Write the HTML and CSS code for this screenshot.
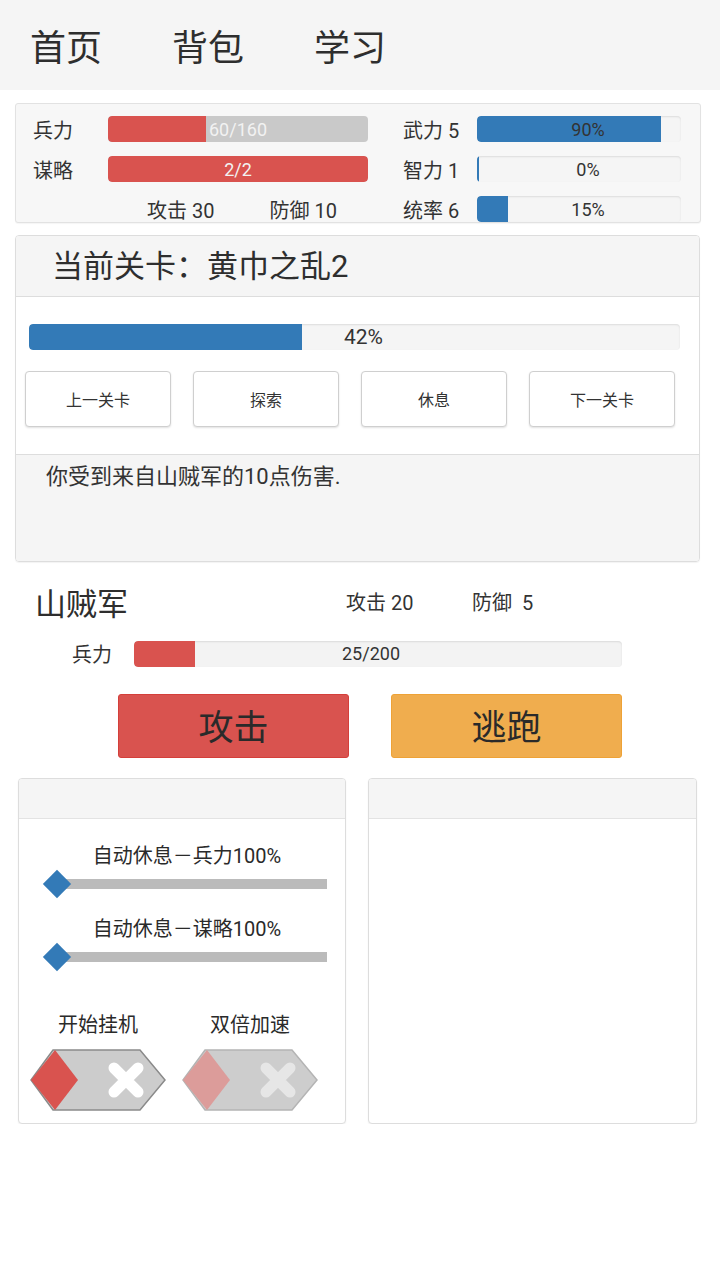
FILE: index.html
```html
<!DOCTYPE html>
<html lang="zh-CN">
<head>
<meta charset="utf-8">
<title>三国</title>
<link rel="stylesheet" href="styles.css">
</head>
<body>
<nav class="topnav">
  <span class="nav-item">首页</span>
  <span class="nav-item">背包</span>
  <span class="nav-item">学习</span>
</nav>

<section class="stats">
  <span class="label">兵力</span>
  <div class="bar track-gray"><div class="fill red" style="width:37.5%"></div><span class="bar-text light">60/160</span></div>
  <span></span>
  <span class="label">武力 5</span>
  <div class="bar"><div class="fill blue" style="width:90%"></div><span class="bar-text shift">90%</span></div>

  <span class="label">谋略</span>
  <div class="bar"><div class="fill red full" style="width:100%"></div><span class="bar-text light">2/2</span></div>
  <span></span>
  <span class="label">智力 1</span>
  <div class="bar"><div class="fill blue zero"></div><span class="bar-text shift">0%</span></div>

  <span></span>
  <div class="atk-def"><span>攻击 30</span><span>防御 10</span></div>
  <span></span>
  <span class="label">统率 6</span>
  <div class="bar"><div class="fill blue" style="width:15%"></div><span class="bar-text shift">15%</span></div>
</section>

<section class="level">
  <header class="level-head">当前关卡：黄巾之乱2</header>
  <div class="level-body">
    <div class="bar big"><div class="fill blue" style="width:42%"></div><span class="bar-text shift big-text">42%</span></div>
    <div class="level-btns">
      <button class="lbtn">上一关卡</button>
      <button class="lbtn">探索</button>
      <button class="lbtn">休息</button>
      <button class="lbtn">下一关卡</button>
    </div>
  </div>
  <div class="log">你受到来自山贼军的10点伤害.</div>
</section>

<section class="enemy">
  <div class="enemy-head">
    <span class="enemy-name">山贼军</span>
    <span class="enemy-stat">攻击 20</span>
    <span class="enemy-stat">防御&nbsp;&nbsp;5</span>
  </div>
  <div class="enemy-hp">
    <span class="enemy-hp-label">兵力</span>
    <div class="bar enemy-bar"><div class="fill red" style="width:12.5%"></div><span class="bar-text left-shift">25/200</span></div>
  </div>
  <div class="actions">
    <button class="abtn attack">攻击</button>
    <button class="abtn flee">逃跑</button>
  </div>
</section>

<section class="panels">
  <div class="panel">
    <div class="panel-head"></div>
    <div class="panel-body">
      <div class="slider">
        <div class="slider-label">自动休息－兵力100%</div>
        <div class="slider-rail"><div class="slider-track"></div><div class="slider-thumb"></div></div>
      </div>
      <div class="slider second">
        <div class="slider-label">自动休息－谋略100%</div>
        <div class="slider-rail"><div class="slider-track"></div><div class="slider-thumb"></div></div>
      </div>
      <div class="toggles">
        <div class="toggle-group">
          <span class="toggle-label">开始挂机</span>
          <svg class="toggle" width="136" height="62" viewBox="0 0 136 62">
            <polygon points="23,1 110,1 135,31 110,61 23,61 1,31" fill="#cccccc" stroke="#8a8a8a" stroke-width="1.5"/>
            <polygon points="1,31 25,1 48,31 25,61" fill="#d9534f"/>
            <path d="M84 19 L108 43 M108 19 L84 43" stroke="#ffffff" stroke-width="11" stroke-linecap="round"/>
          </svg>
        </div>
        <div class="toggle-group">
          <span class="toggle-label">双倍加速</span>
          <svg class="toggle" width="136" height="62" viewBox="0 0 136 62">
            <polygon points="23,1 110,1 135,31 110,61 23,61 1,31" fill="#cdcdcd" stroke="#b4b4b4" stroke-width="1.5"/>
            <polygon points="1,31 25,1 48,31 25,61" fill="#dc9c9a"/>
            <path d="M84 19 L108 43 M108 19 L84 43" stroke="#e6e6e6" stroke-width="11" stroke-linecap="round"/>
          </svg>
        </div>
      </div>
    </div>
  </div>
  <div class="panel">
    <div class="panel-head"></div>
    <div class="panel-body"></div>
  </div>
</section>
</body>
</html>
```

FILE: styles.css
```css
* { box-sizing: border-box; }

body {
  margin: 0;
  background: #ffffff;
  color: #333333;
  font-family: Roboto, "Noto Sans CJK SC", sans-serif;
}

.topnav {
  height: 90px;
  background: #f5f5f5;
  display: flex;
  align-items: center;
  gap: 70px;
  padding-left: 30px;
  font-size: 36px;
  color: #2e2e2e;
}

.stats {
  margin: 13px 19px 0 15px;
  border: 1px solid #e2e2e2;
  border-radius: 3px;
  background: #f7f7f7;
  padding: 12px 19px 0 17px;
  display: grid;
  grid-template-columns: 75px 260px 35px 74px 204px;
  grid-template-rows: repeat(3, 26px);
  row-gap: 14px;
  align-items: center;
  font-size: 20px;
  box-shadow: 0 1px 1px rgba(0, 0, 0, 0.04);
}

.label { white-space: nowrap; }

.bar {
  position: relative;
  height: 26px;
  border-radius: 4px;
  background: #f5f5f5;
  box-shadow: inset 0 1px 2px rgba(0, 0, 0, 0.1);
  overflow: hidden;
}

.track-gray { background: #c9c9c9; box-shadow: none; }

.fill {
  height: 100%;
  border-radius: 4px 0 0 4px;
}
.fill.full { border-radius: 4px; }
.fill.zero { width: 2px; }

.red { background: #d9534f; }
.blue { background: #337ab7; }

.bar-text {
  position: absolute;
  inset: 0;
  display: flex;
  align-items: center;
  justify-content: center;
  font-size: 18px;
  color: #333333;
}
.bar-text.light { color: #f2f2f2; }
.bar-text.shift { padding-left: 18px; }
.bar-text.left-shift { padding-right: 14px; }
.bar-text.big-text { font-size: 21px; }

.atk-def {
  display: flex;
  gap: 55px;
  padding-left: 39px;
  white-space: nowrap;
}

.level {
  margin: 12px 20px 0 15px;
  border: 1px solid #dddddd;
  border-radius: 4px;
  overflow: hidden;
  box-shadow: 0 1px 1px rgba(0, 0, 0, 0.05);
}

.level-head {
  height: 61px;
  background: #f5f5f5;
  border-bottom: 1px solid #dddddd;
  padding-left: 36px;
  padding-bottom: 6px;
  display: flex;
  align-items: center;
  font-size: 31px;
  color: #2e2e2e;
}

.level-body {
  background: #ffffff;
  padding: 27px 19px 27px 13px;
}

.level-btns {
  display: flex;
  gap: 22px;
  margin-top: 21px;
  margin-left: -4px;
}

.lbtn {
  width: 146px;
  height: 56px;
  background: #ffffff;
  border: 1px solid #cfcfcf;
  border-radius: 4px;
  box-shadow: 0 1px 2px rgba(0, 0, 0, 0.12);
  font-family: inherit;
  font-size: 16px;
  color: #333333;
  padding: 0;
}

.log {
  height: 107px;
  background: #f5f5f5;
  border-top: 1px solid #dddddd;
  padding: 7px 30px;
  font-size: 22px;
  line-height: 30px;
}

.enemy-head {
  display: flex;
  align-items: center;
  height: 46px;
  margin-top: 16px;
  padding-left: 35px;
}

.enemy-name {
  width: 311px;
  font-size: 31px;
  color: #2e2e2e;
}

.enemy-stat {
  font-size: 20px;
  white-space: nowrap;
  width: 126px;
}

.enemy-hp {
  display: flex;
  align-items: center;
  margin-top: 15px;
  padding-left: 72px;
  font-size: 20px;
}

.enemy-hp-label { width: 62px; }

.enemy-bar {
  width: 488px;
  background: #f3f3f3;
}

.actions {
  display: flex;
  gap: 42px;
  margin-top: 26px;
  padding-left: 118px;
}

.abtn {
  width: 231px;
  height: 64px;
  border-radius: 3px;
  font-family: inherit;
  font-size: 35px;
  color: #2a2a2a;
  padding: 0 0 4px 0;
}
.abtn.attack { background: #d9534f; border: 1px solid #d43f3a; }
.abtn.flee { background: #f0ad4e; border: 1px solid #eea236; }

.panels {
  display: flex;
  gap: 22px;
  margin: 20px 0 0 18px;
}

.panel {
  width: 328px;
  height: 346px;
  border: 1px solid #dddddd;
  border-radius: 4px;
  overflow: hidden;
  box-shadow: 0 1px 2px rgba(0, 0, 0, 0.06);
  background: #ffffff;
}
.panel + .panel { width: 329px; }

.panel-head {
  height: 40px;
  background: #f5f5f5;
  border-bottom: 1px solid #e3e3e3;
}

.panel-body {
  padding: 23px 0 0 0;
}

.slider {
  margin-left: 25px;
  width: 286px;
}
.slider.second { margin-top: 17px; }

.slider-label {
  text-align: center;
  font-size: 20px;
  line-height: 28px;
  color: #2a2a2a;
}

.slider-rail {
  position: relative;
  height: 28px;
  padding: 9px 3px 0 14px;
}

.slider-track {
  height: 10px;
  background: #bbbbbb;
}

.slider-thumb {
  position: absolute;
  left: 3px;
  top: 4px;
  width: 20px;
  height: 20px;
  background: #337ab7;
  transform: rotate(45deg);
}

.toggles {
  display: flex;
  gap: 16px;
  margin: 40px 0 0 11px;
}

.toggle-group {
  display: flex;
  flex-direction: column;
  align-items: center;
  gap: 10px;
}

.toggle-label {
  font-size: 20px;
  line-height: 28px;
  color: #2a2a2a;
}

.toggle { display: block; }
```
